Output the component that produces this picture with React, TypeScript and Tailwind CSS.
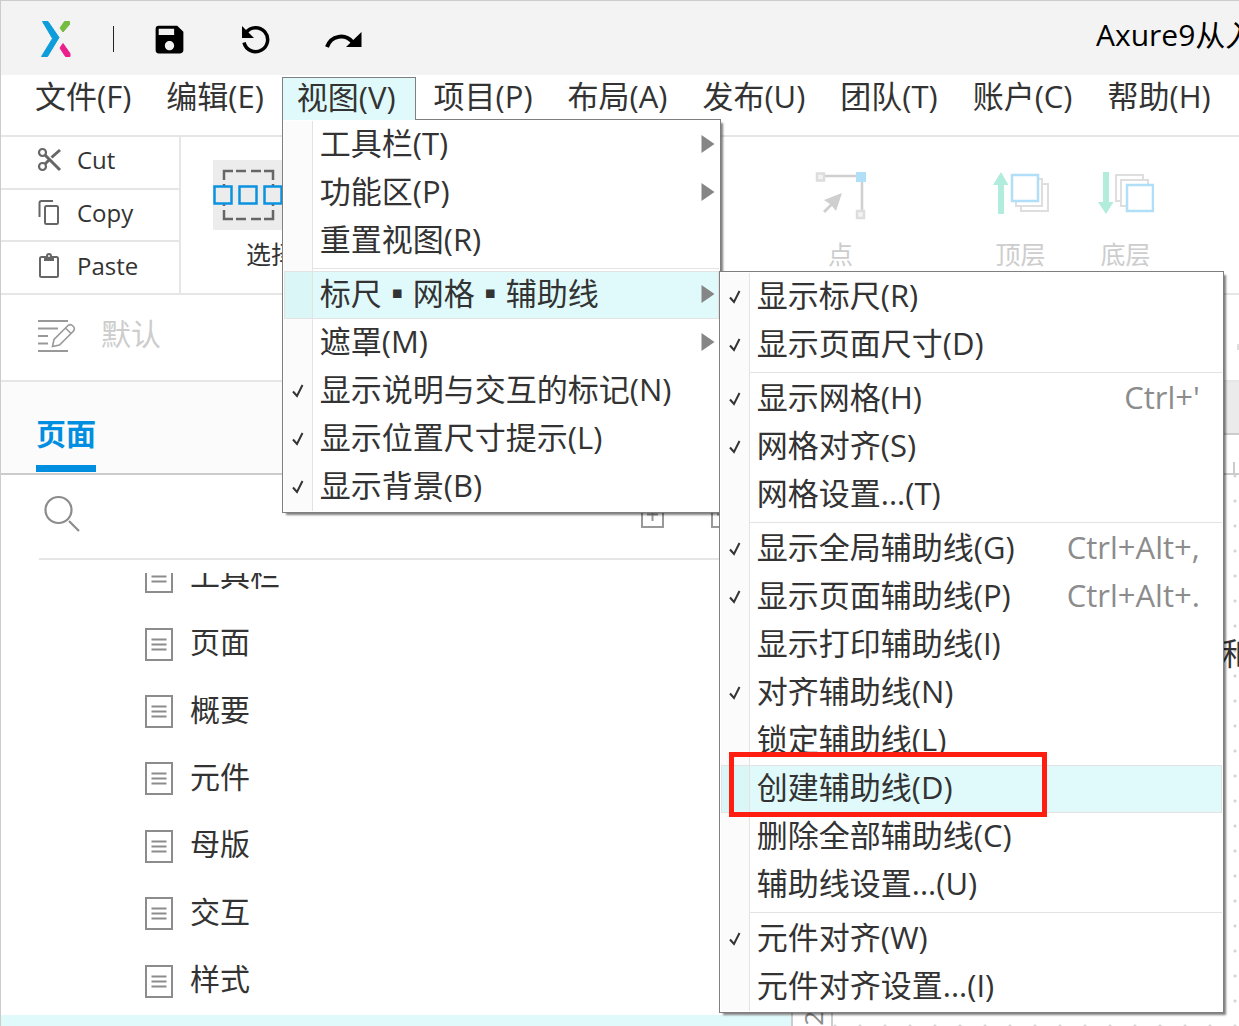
import React from 'react';
import { MdSave } from 'react-icons/md';

type Item = {
    label: string;
    checked?: boolean;
    shortcut?: string;
    arrow?: boolean;
    active?: boolean;
    children?: Entry[];
};

type Entry = Item | 'sep';

const guideMenu: Entry[] = [
    { label: '显示标尺(R)', checked: true },
    { label: '显示页面尺寸(D)', checked: true },
    'sep',
    { label: '显示网格(H)', checked: true, shortcut: "Ctrl+'" },
    { label: '网格对齐(S)', checked: true },
    { label: '网格设置...(T)' },
    'sep',
    { label: '显示全局辅助线(G)', checked: true, shortcut: 'Ctrl+Alt+,' },
    { label: '显示页面辅助线(P)', checked: true, shortcut: 'Ctrl+Alt+.' },
    { label: '显示打印辅助线(I)' },
    { label: '对齐辅助线(N)', checked: true },
    { label: '锁定辅助线(L)' },
    { label: '创建辅助线(D)', active: true },
    { label: '删除全部辅助线(C)' },
    { label: '辅助线设置...(U)' },
    'sep',
    { label: '元件对齐(W)', checked: true },
    { label: '元件对齐设置...(I)' },
];

const viewMenu: Entry[] = [
    { label: '工具栏(T)', arrow: true },
    { label: '功能区(P)', arrow: true },
    { label: '重置视图(R)' },
    'sep',
    { label: '标尺▪网格▪辅助线', arrow: true, active: true, children: guideMenu },
    { label: '遮罩(M)', arrow: true },
    { label: '显示说明与交互的标记(N)', checked: true },
    { label: '显示位置尺寸提示(L)', checked: true },
    { label: '显示背景(B)', checked: true },
];

const menuBar = ['文件(F)', '编辑(E)', '视图(V)', '项目(P)', '布局(A)', '发布(U)', '团队(T)', '账户(C)', '帮助(H)'];

const pages = ['工具栏', '页面', '概要', '元件', '母版', '交互', '样式'];

const MenuRow = ({ item }: { item: Item }) => (
    <li className="relative">
        <button className={`flex h-[48px] w-full items-stretch text-left ${item.active ? 'bg-[#e0fafb] outline outline-1 -outline-offset-1 outline-[#e3e3e3]' : ''}`}>
            <span className={`flex w-[29px] shrink-0 items-center justify-center border-r border-[#e3e3e3] ${item.active ? 'bg-[#dbf6f7]' : 'bg-[#fbfbfb]'}`}>
                {item.checked && (
                    <svg width="12" height="14" viewBox="0 0 12 14" fill="none" stroke="#333" strokeWidth="2">
                        <path d="M1 7.500l4 4.500L10.500 1" />
                    </svg>
                )}
            </span>
            <span className="flex-1 whitespace-nowrap pl-[7px] leading-[45px]">{item.label}</span>
            {item.shortcut && <span className="pr-[22px] leading-[45px] text-[#8c8c8c]">{item.shortcut}</span>}
            {item.arrow && (
                <svg className="mb-0.5 mr-1 self-center" width="14" height="18" viewBox="0 0 14 18" fill="#868686">
                    <path d="M0.500 0v18L13.500 9z" />
                </svg>
            )}
        </button>
        {item.children && <Menu entries={item.children} className="left-full top-0 w-[505px]" mark />}
    </li>
);

const Menu = ({ entries, className, mark }: { entries: Entry[]; className: string; mark?: boolean }) => (
    <div className={`absolute border border-[#7f7f7f] bg-white p-px shadow-[3px_3px_2px_-1px_rgba(0,0,0,0.5)] ${className}`}>
        <ul>
            {entries.map((e, i) =>
                e === 'sep' ? (
                    <li key={i} className="flex h-1.5 items-center">
                        <span className="h-full w-[29px] border-r border-[#e3e3e3] bg-[#fbfbfb]" />
                        <span className="h-px flex-1 bg-[#e3e3e3]" />
                    </li>
                ) : (
                    <MenuRow key={i} item={e} />
                )
            )}
        </ul>
        {mark && <div className="pointer-events-none absolute left-[9px] top-[480px] h-[65px] w-[318px] border-[5px] border-[#ff1e10]" />}
    </div>
);

const Logo = () => (
    <svg width="30" height="36" viewBox="0 0 30 36">
        <path d="M1.500 0.500H7L18 16.500 6.500 35.500H0.500L11.500 17.500z" fill="#0d9ddb" stroke="#0d9ddb" strokeLinejoin="round" />
        <path d="M23.500 0.500h5v3L22 11l-3-4z" fill="#76bc43" stroke="#76bc43" strokeLinejoin="round" />
        <path d="M22 22.500l-3 4.500 5.500 8.500h4.500v-3z" fill="#ec1e8c" stroke="#ec1e8c" strokeLinejoin="round" />
    </svg>
);

const TitleBar = () => (
    <header className="flex h-[74px] shrink-0 items-center overflow-hidden bg-[#f3f3f3] pl-10 pt-0.5">
        <Logo />
        <span className="ml-[42px] h-[26px] w-px bg-[#222]" />
        <div className="ml-[35px] flex gap-[47px] text-black">
            <button aria-label="保存" className="flex h-10 w-10 items-center justify-center">
                <MdSave size={37} />
            </button>
            <button aria-label="撤销" className="flex h-10 w-10 items-center justify-center">
                <svg width="30" height="30" viewBox="0 0 30 30">
                    <path d="M5 8.500A12 12 0 1 1 3 18.500" fill="none" stroke="currentColor" strokeWidth="3.500" />
                    <path d="M1 2v12h12z" fill="currentColor" />
                </svg>
            </button>
            <button aria-label="重做" className="flex h-10 w-10 items-center justify-center">
                <svg width="37" height="20" viewBox="0 0 37 20">
                    <path d="M2 18C6 6.500 20 4 28 13.500" fill="none" stroke="currentColor" strokeWidth="4" />
                    <path d="M36.500 3v15H21z" fill="currentColor" />
                </svg>
            </button>
        </div>
        <h1 className="ml-auto w-[143px] whitespace-nowrap pb-2 text-[30px] leading-[60px] text-black">Axure9从入门到精通</h1>
    </header>
);

const MenuBar = () => (
    <nav className="flex h-[60px] shrink-0 gap-px pl-[17px] pt-0.5">
        {menuBar.map((label) =>
            label.startsWith('视图') ? (
                <div key={label} className="relative z-20 h-[42px]">
                    <button className="relative z-10 block h-[43px] whitespace-nowrap border border-b-0 border-[#7f7f7f] bg-[#e0fafb] pb-1 pl-3.5 pr-[19px] leading-[38px]">{label}</button>
                    <Menu entries={viewMenu} className="left-0 top-[42px] w-[439px]" />
                </div>
            ) : (
                <button key={label} className="h-[42px] whitespace-nowrap px-[17px] pb-1 leading-[38px]">
                    {label}
                </button>
            )
        )}
    </nav>
);

const clipboard = [
    {
        label: 'Cut',
        icon: (
            <svg width="26" height="26" viewBox="0 0 26 26" fill="none" stroke="#666" strokeWidth="2.200">
                <circle cx="5.500" cy="5.500" r="3.500" />
                <circle cx="5.500" cy="19.500" r="3.500" />
                <path d="M8 8l15 15M8 17l4-4M14.500 10.500L23 3" strokeWidth="3" />
            </svg>
        ),
    },
    {
        label: 'Copy',
        icon: (
            <svg width="26" height="28" viewBox="0 0 26 28" fill="none" stroke="#666" strokeWidth="2">
                <path d="M2.500 18V4Q2.500 2 4.500 2H16" />
                <rect x="8" y="7" width="13" height="18" rx="1.500" />
            </svg>
        ),
    },
    {
        label: 'Paste',
        icon: (
            <svg width="26" height="28" viewBox="0 0 26 28" fill="none" stroke="#666" strokeWidth="2">
                <rect x="3" y="5" width="18" height="20" rx="1.500" />
                <path d="M7 4h10v5H7z" fill="#666" stroke="none" />
                <circle cx="12" cy="4" r="2" fill="#fff" />
            </svg>
        ),
    },
];

const Toolbar = () => (
    <section className="flex h-[160px] shrink-0 overflow-hidden border-y-2 border-[#e6e6e6]">
        <div className="flex w-[180px] shrink-0 flex-col divide-y-2 divide-[#e6e6e6] border-r-2 border-[#e6e6e6]">
            {clipboard.map((c) => (
                <button key={c.label} className="flex flex-1 items-center gap-3.5 pb-1 pl-9 text-[24px] leading-8">
                    {c.icon}
                    {c.label}
                </button>
            ))}
        </div>
        <div className="flex flex-1 pt-[23px] text-[25px] leading-8">
            <button className="ml-8 flex w-[116px] flex-col items-center gap-2">
                <span className="h-[70px] w-full bg-[#ececec]">
                    <svg width="70" height="70" viewBox="0 0 70 70" fill="none">
                        <path d="M11 20V11H20M23 11H33M38 11H48M51 11H60V20M60 24V27M11 24V27M11 44V46M60 44V46M11 50V59H20M23 59H33M38 59H48M51 59H60V50" stroke="#666" strokeWidth="2.500" />
                        <g stroke="#0a92e0" strokeWidth="2.500">
                            <path d="M1.500 26.500h17v17h-17zM26.500 26.500h17v17h-17zM51.500 26.500h17v17h-17z" />
                        </g>
                    </svg>
                </span>
                选择
            </button>
            <button disabled className="ml-auto flex w-[105px] flex-col items-center gap-2 text-[#cdcdcd]">
                <svg width="52" height="70" viewBox="0 0 52 70">
                    <path d="M10 16H42M47 22V50" fill="none" stroke="#cfcfcf" strokeWidth="2.500" />
                    <path d="M2 13.500h7v7h-7zM42 51h7v7h-7z" fill="#f3f3f3" stroke="#ddd" strokeWidth="2.500" />
                    <path d="M41 12h10v10H41z" fill="#b1dff8" />
                    <path d="M27 33l-6 18-4-5-7 7-2-2 7-7-6-4z" fill="#cfcfcf" />
                </svg>
                点
            </button>
            <button disabled className="ml-[75px] flex w-[105px] flex-col items-center gap-2 text-[#cdcdcd]">
                <svg width="56" height="70" viewBox="0 0 56 70" fill="none">
                    <path d="M8 12l7.500 13H11v29H5V25H0z" fill="#b2ecdc" />
                    <path d="M45 19h4v27H23v-4M50 24h5v27H28v-5" stroke="#dedede" strokeWidth="2" />
                    <path d="M19 15h26v26H19z" stroke="#b1dff8" strokeWidth="2.500" />
                </svg>
                顶层
            </button>
            <button disabled className="mr-[61px] flex w-[105px] flex-col items-center gap-2 text-[#cdcdcd]">
                <svg width="56" height="70" viewBox="0 0 56 70" fill="none">
                    <path d="M8 54l7.500-12H11V12H5v30H0z" fill="#b2ecdc" />
                    <path d="M23 41h-5V15h27v4M28 46h-5V20h27v4" stroke="#dedede" strokeWidth="2" />
                    <path d="M29 25h26v26H29z" stroke="#b1dff8" strokeWidth="2.500" />
                </svg>
                底层
            </button>
        </div>
    </section>
);

const StyleBar = () => (
    <section className="flex h-[87px] shrink-0 items-center border-b-2 border-[#e6e6e6] pb-1 pl-[37px]">
        <svg width="38" height="34" viewBox="0 0 38 34" fill="none" stroke="#999" strokeWidth="2">
            <path d="M0 2h30M0 9.500h20M0 17h10M0 24.500h10M0 32h30" />
            <path d="M14.500 27.500l1.500-7L30 6.500q2.500-2 5 0.500t0.500 5L21.500 26zM27.500 9l6 6" strokeWidth="1.600" />
        </svg>
        <span className="ml-[25px] pb-1 text-[30px] text-[#cdcdcd]">默认</span>
        <span className="mb-[-22px] ml-auto h-1.5 w-0.5 bg-[#ddd]" />
    </section>
);

const PageIcon = () => (
    <svg width="28" height="33" viewBox="0 0 28 33" fill="none" stroke="#8c8c8c" strokeWidth="2">
        <path d="M1 1h26v31H1zM6.500 11.500h15M6.500 16.500h15M6.500 21.500h15" />
    </svg>
);

const ExpandIcon = () => (
    <svg width="23" height="23" viewBox="0 0 23 23" fill="none" stroke="#999" strokeWidth="2">
        <path d="M1 1h21v21H1zM6 9.500h11M11.500 4v12" />
    </svg>
);

const PagesPanel = () => (
    <aside className="flex w-[790px] shrink-0 flex-col">
        <div className="h-[93px] shrink-0 border-b-2 border-[#ccc] bg-[#fbfbfb] pl-[35px]">
            <button className="block h-[90px] border-b-[7px] border-[#008fe0] pt-5 text-[30px] font-bold leading-[64px] text-[#008fe0]">页面</button>
        </div>
        <div className="ml-[38px] flex h-[85px] shrink-0 border-b-2 border-[#e6e6e6] pl-[5px] pt-5">
            <svg width="38" height="38" viewBox="0 0 38 38" fill="none" stroke="#8c8c8c" strokeWidth="2.200">
                <circle cx="14.500" cy="15" r="13" />
                <path d="M25 26l10 10" />
            </svg>
            <div className="ml-auto mr-[57px] flex gap-[47px] pt-[10px]">
                <ExpandIcon />
                <ExpandIcon />
            </div>
        </div>
        <div className="mt-[13px] flex h-[442px] shrink-0 flex-col justify-end overflow-hidden">
            <ul className="grid h-[472px] shrink-0 auto-rows-fr">
                {pages.map((p) => (
                    <li key={p} className="flex items-center gap-[17px] pl-36 text-[30px] leading-10">
                        <PageIcon />
                        <span className="pb-1">{p}</span>
                    </li>
                ))}
            </ul>
        </div>
        <div className="flex-1 bg-[#e0fafb]" />
    </aside>
);

const Canvas = () => (
    <main className="flex flex-1 flex-col overflow-hidden border-l-2 border-[#ccc]">
        <div className="h-[53px] shrink-0 border-b-2 border-[#ccc] bg-[#ebebeb]" />
        <div className="flex h-[40px] shrink-0 items-end justify-end border-b-2 border-[#ccc]">
            <span className="mr-1 h-[11px] w-0.5 bg-[#ccc]" />
        </div>
        <div className="flex min-h-0 flex-1">
            <div className="flex w-10 shrink-0 flex-col justify-end overflow-hidden border-r-2 border-[#ccc]">
                <span className="h-3 text-[26px] leading-[40px] text-[#8c8c8c] [writing-mode:sideways-lr]">20</span>
            </div>
            <div className="relative flex-1 overflow-hidden bg-[radial-gradient(circle_at_3px_3px,#d4d4d4_1px,transparent_2px)] bg-[length:25px_25px] bg-[position:-1px_-2px]">
                <span className="absolute left-[388px] top-[154px] whitespace-nowrap text-[31px] leading-[48px]">和</span>
            </div>
        </div>
    </main>
);

const App = () => {
    return (
        <div className="flex h-screen flex-col overflow-hidden border-l border-t border-[#ccc] bg-white font-['Open_Sans','Noto_Sans_CJK_SC',sans-serif] text-[31px] text-[#333]">
            <TitleBar />
            <MenuBar />
            <Toolbar />
            <StyleBar />
            <div className="flex min-h-0 flex-1">
                <PagesPanel />
                <Canvas />
            </div>
        </div>
    );
};

export default App;
